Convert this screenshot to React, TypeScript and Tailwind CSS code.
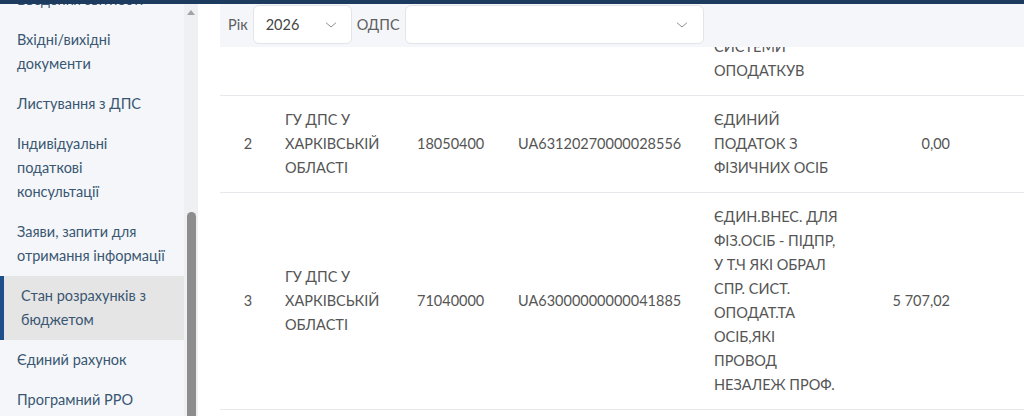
import React from "react";

const navItems: { lines: string[]; active?: boolean }[] = [
  { lines: ["Введення звітності"] },
  { lines: ["Вхідні/вихідні", "документи"] },
  { lines: ["Листування з ДПС"] },
  { lines: ["Індивідуальні", "податкові", "консультації"] },
  { lines: ["Заяви, запити для", "отримання інформації"] },
  { lines: ["Стан розрахунків з", "бюджетом"], active: true },
  { lines: ["Єдиний рахунок"] },
  { lines: ["Програмний РРО"] },
];

const rows = [
  {
    n: "",
    org: [] as string[],
    code: "",
    iban: "",
    desc: [
      "ЄДИНИЙ ПОДАТОК З",
      "СІЛЬСЬКОГОСП.",
      "ТОВАРОВИРОБН.,",
      "У ЯКИХ ЧАСТКА",
      "С/Г ВИРОБН. ЗА",
      "СИСТЕМИ",
      "ОПОДАТКУВ",
    ],
    amount: "",
  },
  {
    n: "2",
    org: ["ГУ ДПС У", "ХАРКІВСЬКІЙ", "ОБЛАСТІ"],
    code: "18050400",
    iban: "UA63120270000028556",
    desc: ["ЄДИНИЙ", "ПОДАТОК З", "ФІЗИЧНИХ ОСІБ"],
    amount: "0,00",
  },
  {
    n: "3",
    org: ["ГУ ДПС У", "ХАРКІВСЬКІЙ", "ОБЛАСТІ"],
    code: "71040000",
    iban: "UA63000000000041885",
    desc: [
      "ЄДИН.ВНЕС. ДЛЯ",
      "ФІЗ.ОСІБ - ПІДПР,",
      "У Т.Ч ЯКІ ОБРАЛ",
      "СПР. СИСТ.",
      "ОПОДАТ.ТА",
      "ОСІБ,ЯКІ",
      "ПРОВОД",
      "НЕЗАЛЕЖ ПРОФ.",
    ],
    amount: "5 707,02",
  },
];

function Chevron() {
  return (
    <svg width="16" height="16" viewBox="0 0 24 24" fill="none" stroke="#8a8f96" strokeWidth="1.5" strokeLinecap="round" strokeLinejoin="round">
      <path d="M5 9l7 6 7-6" />
    </svg>
  );
}

export default function App() {
  return (
    <div
      className="w-[1024px] h-[416px] overflow-hidden bg-white flex flex-col"
      style={{ fontFamily: "Lato, 'Open Sans', sans-serif" }}
    >
      <div className="h-[4px] shrink-0 bg-[#1d3b5f]" />
      <div className="flex flex-1 min-h-0">
        <aside className="w-[198px] shrink-0 flex bg-[#f4f6f9] overflow-hidden">
          <nav className="w-[184px] shrink-0 -mt-[24px] flex flex-col">
            {navItems.map((it, i) => (
              <div
                key={i}
                className={
                  it.active
                    ? "py-2 pl-[17px] border-l-4 border-[#1f4f8a] bg-[#e5e5e5] text-[14.5px] leading-[24px] text-[#395672]"
                    : "py-2 pl-[17px] text-[14.5px] leading-[24px] text-[#395672]"
                }
              >
                {it.lines.map((l, j) => (
                  <div key={j} className="whitespace-nowrap">
                    {l}
                  </div>
                ))}
              </div>
            ))}
          </nav>
          <div className="w-[14px] shrink-0 bg-[#eef0f3] flex flex-col items-center">
            <div className="mt-[6px] w-0 h-0 border-l-[4px] border-r-[4px] border-b-[5px] border-l-transparent border-r-transparent border-b-[#a3a3a3]" />
            <div className="mt-[197px] w-[9px] flex-1 rounded-t-[5px] bg-[#8d8d8d]" />
          </div>
        </aside>
        <main className="flex-1 relative overflow-hidden pl-[22px] text-[14.5px] leading-[24px] text-[#555555]">
          <div className="-mt-[101px]">
            {rows.map((r, i) => (
              <div
                key={i}
                className="grid grid-cols-[56px_132px_101px_196px_155px_99px_1fr] items-center py-3 border-b border-[#e6e8eb]"
              >
                <div className="text-center">{r.n}</div>
                <div className="pl-[9px]">
                  {r.org.map((l, j) => (
                    <div key={j} className="whitespace-nowrap">{l}</div>
                  ))}
                </div>
                <div className="pl-[9px]">{r.code}</div>
                <div className="pl-[9px]">{r.iban}</div>
                <div className="pl-[9px]">
                  {r.desc.map((l, j) => (
                    <div key={j} className="whitespace-nowrap">{l}</div>
                  ))}
                </div>
                <div className="pr-[9px] text-right">{r.amount}</div>
                <div />
              </div>
            ))}
          </div>
          <div className="absolute top-0 left-[22px] right-0 h-[43px] bg-[#f4f6f9] flex items-start pt-[1px] pl-[8px] gap-[5px] text-[#5f5f5f]">
            <span className="mt-[8px]">Рік</span>
            <div className="w-[99px] h-[39px] rounded-[6px] border border-[#e2e4e7] bg-white flex items-center justify-between pl-[12px] pr-[12px] text-[#444]">
              <span>2026</span>
              <Chevron />
            </div>
            <span className="mt-[8px]">ОДПС</span>
            <div className="w-[299px] h-[39px] rounded-[6px] border border-[#e2e4e7] bg-white flex items-center justify-end pr-[13px]">
              <Chevron />
            </div>
          </div>
        </main>
      </div>
    </div>
  );
}
